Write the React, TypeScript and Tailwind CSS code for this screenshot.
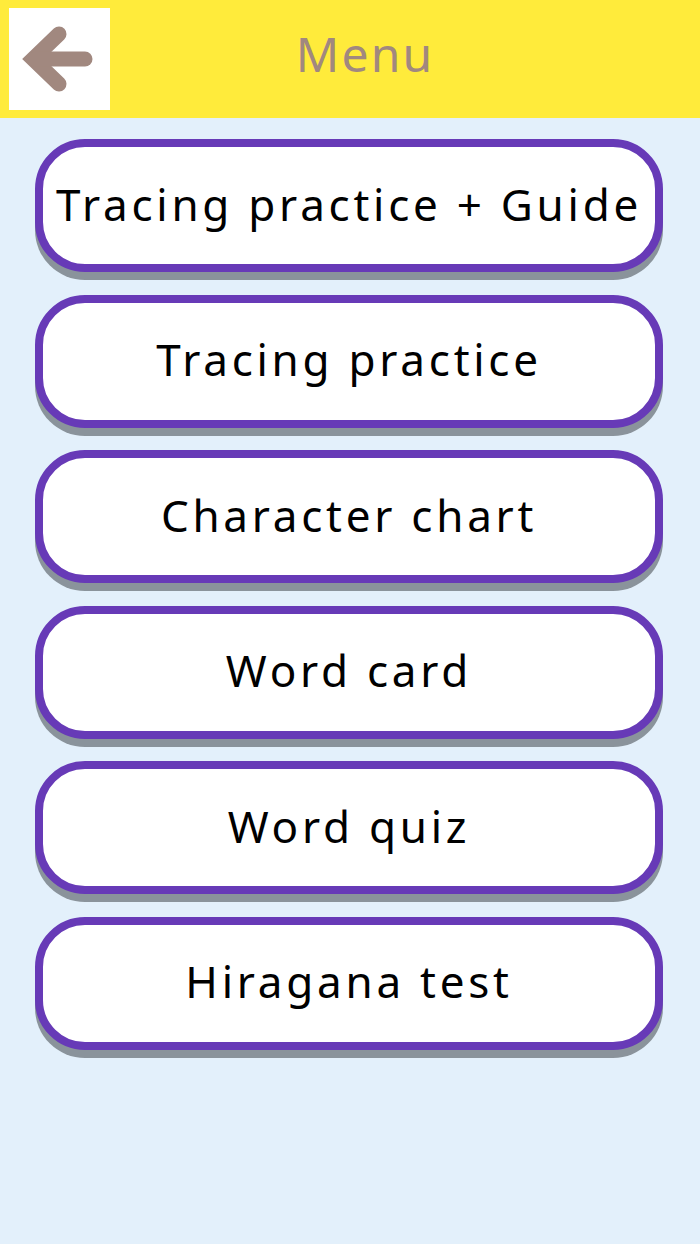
import React from "react";

const items = [
  "Tracing practice + Guide",
  "Tracing practice",
  "Character chart",
  "Word card",
  "Word quiz",
  "Hiragana test",
];

export default function App() {
  return (
    <div
      className="w-[700px] h-[1244px] bg-[#e3f0fb] flex flex-col"
      style={{ fontFamily: '"Noto Sans", "Noto Sans CJK JP", sans-serif' }}
    >
      <div className="h-[118px] bg-[#ffeb3b] flex items-start shrink-0">
        <button className="ml-[9px] mt-[8px] w-[101px] h-[102px] bg-white flex items-center justify-center">
          <svg width="101" height="102" viewBox="0 0 101 102">
            <g transform="translate(-9,-8)">
              <polyline
                points="59,34 33,59 59,84"
                fill="none"
                stroke="#a1887f"
                strokeWidth="15"
                strokeLinecap="round"
                strokeLinejoin="miter"
              />
              <line x1="36" y1="59" x2="85" y2="59" stroke="#a1887f" strokeWidth="15" strokeLinecap="round" />
            </g>
          </svg>
        </button>
        <div className="flex-1 h-full flex items-center justify-center pr-[80px]">
          <span className="text-[48px] leading-none text-[#a1887f] tracking-[0.045em] -mt-[10px]">Menu</span>
        </div>
      </div>
      <div className="flex flex-col gap-[22.6px] pl-[35px] pr-[37px] pt-[21px]">
        {items.map((t) => (
          <button
            key={t}
            className="h-[133px] w-full bg-white border-[8px] border-[#673ab7] rounded-[50px] shadow-[0_8px_0_#8a939b] flex items-center justify-center"
          >
            <span className="text-[44px] leading-none text-black tracking-[0.085em] whitespace-nowrap -mt-[4px]">{t}</span>
          </button>
        ))}
      </div>
    </div>
  );
}
